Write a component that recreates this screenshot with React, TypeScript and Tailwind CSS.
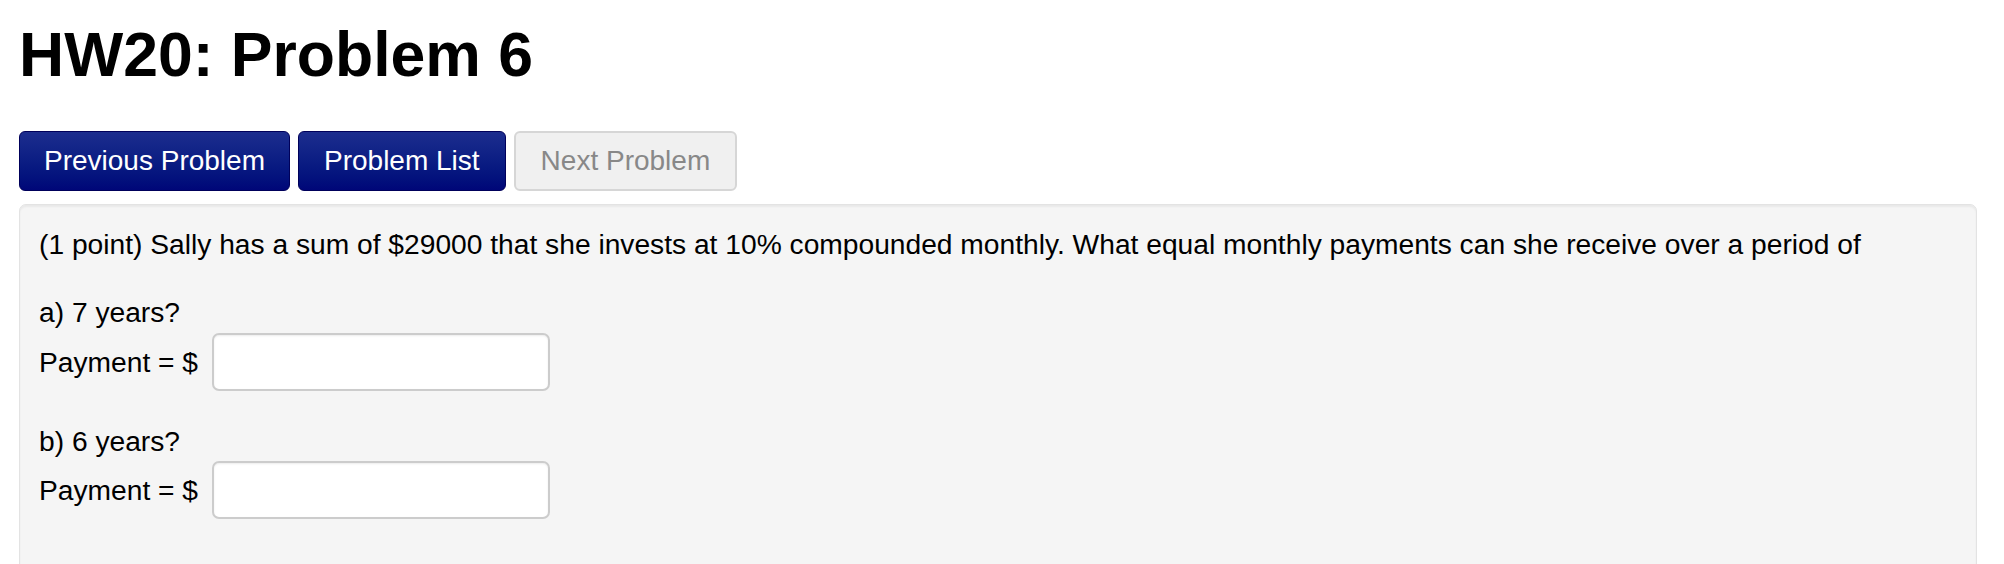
import { useState } from 'react';

const font = { fontFamily: '"Liberation Sans", Arial, Helvetica, sans-serif' };

function AnswerRow({ value, onChange }: { value: string; onChange: (v: string) => void }) {
  return (
    <div className="flex items-center gap-[14px]">
      <span>Payment = $</span>
      <input
        type="text"
        value={value}
        onChange={e => onChange(e.target.value)}
        className="w-[338px] h-[58px] bg-white border-2 border-[#cccccc] rounded-[7px] shadow-[inset_0_1px_2px_rgba(0,0,0,0.08)] px-3 text-[28px] outline-none"
      />
    </div>
  );
}

export default function App() {
  const [a, setA] = useState('');
  const [b, setB] = useState('');

  return (
    <div className="min-h-[564px] bg-white text-black pl-[19px] pr-[27px] pt-[20px] overflow-hidden" style={font}>
      <h1 className="text-[62.5px] leading-[1.1] font-bold">HW20: Problem 6</h1>

      <div className="mt-[42px] flex gap-[8px]">
        <button className="px-[24px] py-[8px] text-[28px] leading-[40px] text-white rounded-[6px] border border-[#00005a] bg-gradient-to-b from-[#1c2d8e] to-[#000678]">
          Previous Problem
        </button>
        <button className="px-[25px] py-[8px] text-[28px] leading-[40px] text-white rounded-[6px] border border-[#00005a] bg-gradient-to-b from-[#1c2d8e] to-[#000678]">
          Problem List
        </button>
        <button disabled className="px-[25px] py-[8px] text-[28px] leading-[40px] text-[#888888] rounded-[6px] border-2 border-[#d6d6d6] bg-[#f0f0f0]">
          Next Problem
        </button>
      </div>

      <div className="mt-[13px] bg-[#f5f5f5] border border-[#e3e3e3] rounded-[7px] shadow-[inset_0_2px_2px_rgba(0,0,0,0.05)] p-[19px] pb-[80px] text-[28.2px] leading-[40px]">
        <p className="mb-[28px]">
          (1 point) Sally has a sum of $29000 that she invests at 10% compounded monthly. What equal monthly payments can she receive over a period of
        </p>
        <div>a) 7 years?</div>
        <div className="mt-[1px]">
          <AnswerRow value={a} onChange={setA} />
        </div>
        <div className="mt-[30px]">b) 6 years?</div>
        <div>
          <AnswerRow value={b} onChange={setB} />
        </div>
      </div>
    </div>
  );
}
